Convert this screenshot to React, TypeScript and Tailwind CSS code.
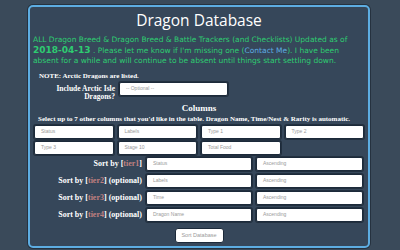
const fontBody = "font-['DejaVu_Sans',Verdana,sans-serif]";

const columnFields = ["Status", "Labels", "Type 1", "Type 2", "Type 3", "Stage 10", "Total Food"];

const sorts = [
  { tier: "tier1", optional: false, field: "Status" },
  { tier: "tier2", optional: true, field: "Labels" },
  { tier: "tier3", optional: true, field: "Time" },
  { tier: "tier4", optional: true, field: "Dragon Name" },
];

const Field = ({ text, className = "" }: { text: string; className?: string }) => (
  <div
    className={`h-[14px] bg-white rounded-[2px] border border-[#1c2a3a] shadow-[0_0_0_1px_#22303f] flex items-center pl-[6px] text-[5px] text-[#9a9a9a] font-['Liberation_Sans',Arial,sans-serif] ${className}`}
  >
    {text}
  </div>
);

const App = () => {
  return (
    <div className="w-[400px] h-[250px] bg-[#3a4a5a] overflow-hidden pt-[5px]">
      <div className="ml-[28px] w-[342px] h-[243px] border-2 border-[#5dade2] rounded-[5px] bg-[#36475a] shadow-[0_0_0_1px_#26323f] flex flex-col">
        <h1 className="text-center text-white text-[15.5px] leading-[22px] mt-[2px] font-['Open_Sans',sans-serif]">
          Dragon Database
        </h1>

        <p className={`${fontBody} text-[7.5px] leading-[10px] text-[#2ecc71] pl-[3px] pr-[4px] mt-[4px]`}>
          ALL Dragon Breed &amp; Dragon Breed &amp; Battle Trackers (and Checklists) Updated as of{" "}
          <span className="font-bold text-[9px] leading-[10px]">2018-04-13</span> . Please let me know if I'm missing
          one (<span className="text-[#5dade2]">Contact Me</span>). I have been absent for a while and will continue
          to be absent until things start settling down.
        </p>

        <p className="font-['Liberation_Serif',serif] font-bold text-[7px] leading-[9px] text-white pl-[9px] mt-[6px]">
          NOTE: Arctic Dragons are listed.
        </p>

        <div className="flex items-start mt-[1px]">
          <div className="w-[85px] text-right font-['Liberation_Serif',serif] font-bold text-[7.5px] leading-[8px] text-white pt-[3px]">
            Include Arctic Isle
            <br />
            Dragons?
          </div>
          <Field text="-- Optional --" className="ml-[4px] w-[109px]" />
        </div>

        <h2 className="text-center font-['Liberation_Serif',serif] font-bold text-[9px] leading-[10px] text-white mt-[2px]">
          Columns
        </h2>
        <p className="font-['Liberation_Serif',serif] font-bold text-[7px] leading-[9px] text-white pl-[8px] mt-[2px]">
          Select up to 7 other columns that you'd like in the table. Dragon Name, Time/Nest &amp; Rarity is automatic.
        </p>

        <div className="grid grid-cols-4 gap-x-[4px] gap-y-[2px] px-[4px] mt-[1px] w-[338px]">
          {columnFields.map((f) => (
            <Field key={f} text={f} />
          ))}
        </div>

        <div className="flex flex-col gap-[3px] mt-[2px]">
          {sorts.map((s) => (
            <div key={s.tier} className="flex items-center">
              <div className="w-[112px] text-right font-['Liberation_Serif',serif] font-bold text-[8px] text-white">
                Sort by [<span className="text-[#c08080]">{s.tier}</span>]{s.optional ? " (optional)" : ""}
              </div>
              <Field text={s.field} className="ml-[4px] w-[106px]" />
              <Field text="Ascending" className="ml-[4px] w-[107px]" />
            </div>
          ))}
        </div>

        <div className="flex justify-center mt-[6px]">
          <button className="h-[15px] w-[49px] bg-white rounded-[3px] border border-[#1c2a3a] text-[5.5px] text-[#9a9a9a] font-['Liberation_Sans',Arial,sans-serif]">
            Sort Database
          </button>
        </div>
      </div>
    </div>
  );
};

export default App;
